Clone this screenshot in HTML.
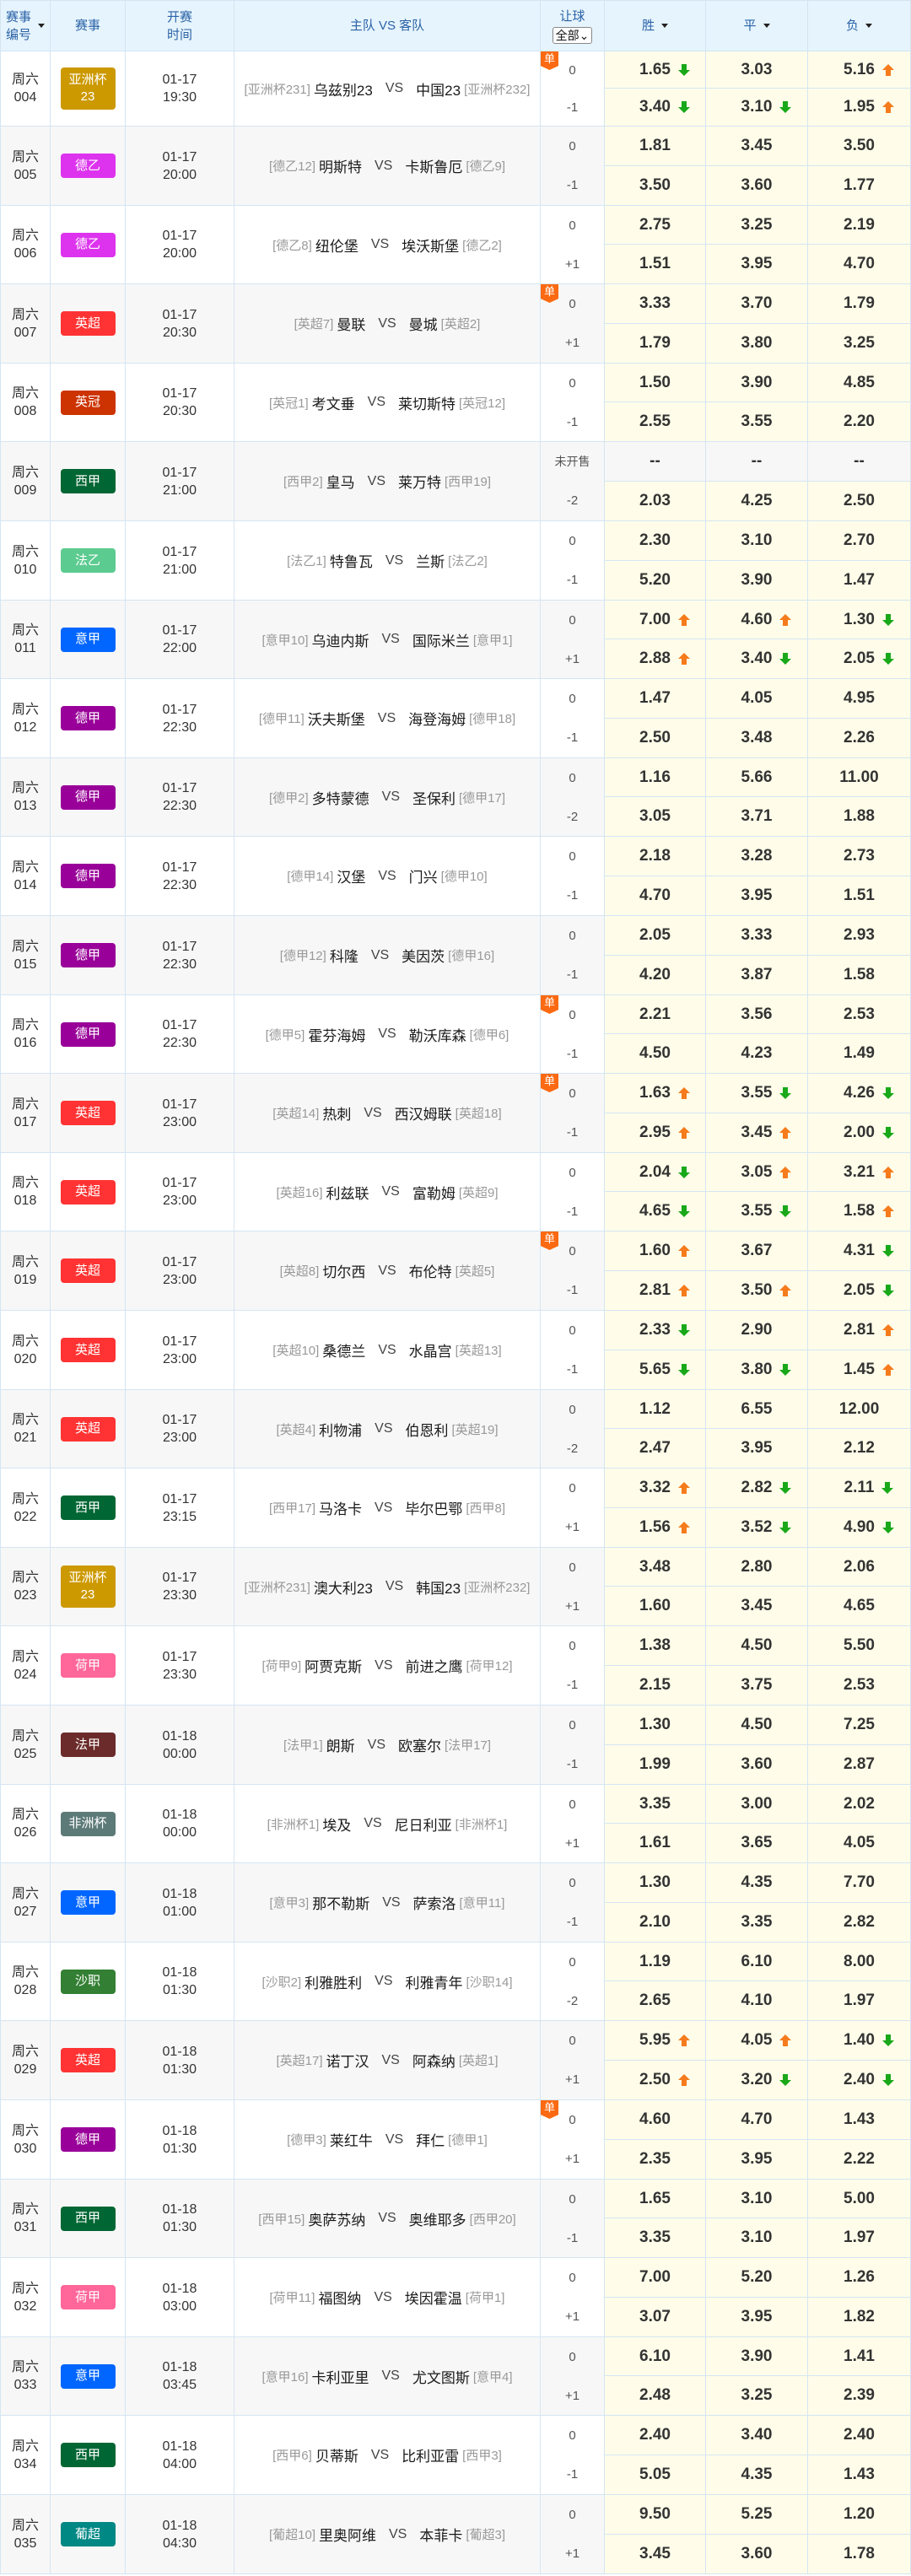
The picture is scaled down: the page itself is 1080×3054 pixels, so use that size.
<!DOCTYPE html>
<html><head><meta charset="utf-8">
<style>
*{margin:0;padding:0;box-sizing:border-box}
body{width:1080px;height:3054px;background:#fff;font-family:"Liberation Sans","Noto Sans CJK SC",sans-serif;position:relative;overflow:hidden;color:#333}
.h{position:absolute;left:0;top:0;width:1080px;height:61px;background:#e6f4fd;border-bottom:1px solid #d3e5f3;border-top:1px solid #d3e5f3;color:#2a62a6;font-size:15px}
.h div{position:absolute;top:0;bottom:0;border-right:1px solid #d3e5f3;display:flex;align-items:center;justify-content:center;text-align:center;line-height:21px}
.tri{display:inline-block;border:4px solid transparent;border-top:5px solid #222;border-bottom:0;margin-left:8px;vertical-align:middle}
.sel{display:inline-block;border:1px solid #888;border-radius:3px;background:#fff;color:#111;font-size:14px;line-height:18px;padding:0 3px;margin-top:2px}
.r{position:absolute;left:0;width:1080px;border-bottom:1px solid #d5e5f3;background:#fff}
.r.g{background:#f7f7f7}
.c{position:absolute;top:0;bottom:0;border-right:1px solid #d5e5f3;display:flex;align-items:center;justify-content:center;text-align:center}
.c1{left:0;width:60px;border-left:1px solid #d5e5f3;font-size:16px;line-height:21px;color:#333}
.c2{left:60px;width:89px}
.c3{left:149px;width:129px;font-size:16px;line-height:21px;color:#333}
.c4{left:278px;width:363px;white-space:nowrap}
.c4 i{font-style:normal;color:#999;font-size:15px;margin:0 4px}
.c4 b{font-weight:normal;color:#1a1a1a;font-size:17px}
.c4 em{font-style:normal;color:#444;font-size:16px;margin:0 15px}
.c5{left:641px;width:76px;flex-direction:column;align-items:stretch}
.c5 p{flex:1;display:flex;align-items:center;justify-content:center;font-size:15px;color:#555}
.b{display:flex;align-items:center;justify-content:center;width:65px;height:29px;border-radius:4px;color:#fff;font-size:15px;line-height:20px}
.b.t{height:50px}
.s{position:absolute;left:0;top:0;width:21px;height:22px;background:#fb6a12;color:#fff;font-size:13px;line-height:17px;text-align:center;clip-path:polygon(0 0,100% 0,100% 78%,50% 100%,0 78%)}
.o{position:absolute;left:717px;right:0;top:0;bottom:0;display:grid;grid-template-columns:120px 121px 1fr;grid-template-rows:1fr 1fr;background:#fffde9}
.o p{border-right:1px solid #d5e5f3;display:flex;align-items:center;justify-content:center;font-weight:bold;font-size:19px;color:#333}
.o p:nth-child(-n+3){border-bottom:1px solid #d5e5f3}
.o span{position:relative}
u{position:absolute;left:calc(100% + 9px);top:50%;width:14px;height:14px;margin-top:-7px}
u::before,u::after{content:"";position:absolute}
u.up::before{left:0;top:0;border:7px solid transparent;border-top:0;border-bottom:7px solid #f57b1c}
u.up::after{left:4px;top:7px;width:6px;height:7px;background:#f57b1c}
u.dn::before{left:0;top:7px;border:7px solid transparent;border-bottom:0;border-top:7px solid #19a819}
u.dn::after{left:4px;top:0;width:6px;height:7px;background:#19a819}
</style></head><body>

<div class="h">
<div style="left:0;width:60px;border-left:1px solid #d3e5f3;justify-content:flex-start;padding-left:6px;text-align:left">赛事<br>编号<span class="tri"></span></div>
<div style="left:60px;width:89px">赛事</div>
<div style="left:149px;width:129px">开赛<br>时间</div>
<div style="left:278px;width:363px">主队 VS 客队</div>
<div style="left:641px;width:76px;flex-direction:column">让球<span class="sel">全部&#8964;</span></div>
<div style="left:717px;width:120px">胜<span class="tri"></span></div>
<div style="left:837px;width:121px">平<span class="tri"></span></div>
<div style="left:958px;width:122px">负<span class="tri"></span></div>
</div>

<div class="r" style="top:61px;height:89px"><div class="c c1">周六<br>004</div><div class="c c2"><span class="b t" style="background:#cc9900">亚洲杯<br>23</span></div><div class="c c3">01-17<br>19:30</div><div class="c c4"><i>[亚洲杯231]</i><b>乌兹别23</b><em>VS</em><b>中国23</b><i>[亚洲杯232]</i></div><div class="c c5"><div class="s">单</div><p>0</p><p>-1</p></div><div class="o"><p><span>1.65<u class="dn"></u></span></p><p><span>3.03</span></p><p><span>5.16<u class="up"></u></span></p><p><span>3.40<u class="dn"></u></span></p><p><span>3.10<u class="dn"></u></span></p><p><span>1.95<u class="up"></u></span></p></div></div>

<div class="r g" style="top:150px;height:94px"><div class="c c1">周六<br>005</div><div class="c c2"><span class="b" style="background:#dd33ee">德乙</span></div><div class="c c3">01-17<br>20:00</div><div class="c c4"><i>[德乙12]</i><b>明斯特</b><em>VS</em><b>卡斯鲁厄</b><i>[德乙9]</i></div><div class="c c5"><p>0</p><p>-1</p></div><div class="o"><p><span>1.81</span></p><p><span>3.45</span></p><p><span>3.50</span></p><p><span>3.50</span></p><p><span>3.60</span></p><p><span>1.77</span></p></div></div>

<div class="r" style="top:244px;height:93px"><div class="c c1">周六<br>006</div><div class="c c2"><span class="b" style="background:#dd33ee">德乙</span></div><div class="c c3">01-17<br>20:00</div><div class="c c4"><i>[德乙8]</i><b>纽伦堡</b><em>VS</em><b>埃沃斯堡</b><i>[德乙2]</i></div><div class="c c5"><p>0</p><p>+1</p></div><div class="o"><p><span>2.75</span></p><p><span>3.25</span></p><p><span>2.19</span></p><p><span>1.51</span></p><p><span>3.95</span></p><p><span>4.70</span></p></div></div>

<div class="r g" style="top:337px;height:94px"><div class="c c1">周六<br>007</div><div class="c c2"><span class="b" style="background:#ff3333">英超</span></div><div class="c c3">01-17<br>20:30</div><div class="c c4"><i>[英超7]</i><b>曼联</b><em>VS</em><b>曼城</b><i>[英超2]</i></div><div class="c c5"><div class="s">单</div><p>0</p><p>+1</p></div><div class="o"><p><span>3.33</span></p><p><span>3.70</span></p><p><span>1.79</span></p><p><span>1.79</span></p><p><span>3.80</span></p><p><span>3.25</span></p></div></div>

<div class="r" style="top:431px;height:93px"><div class="c c1">周六<br>008</div><div class="c c2"><span class="b" style="background:#cc3300">英冠</span></div><div class="c c3">01-17<br>20:30</div><div class="c c4"><i>[英冠1]</i><b>考文垂</b><em>VS</em><b>莱切斯特</b><i>[英冠12]</i></div><div class="c c5"><p>0</p><p>-1</p></div><div class="o"><p><span>1.50</span></p><p><span>3.90</span></p><p><span>4.85</span></p><p><span>2.55</span></p><p><span>3.55</span></p><p><span>2.20</span></p></div></div>

<div class="r g" style="top:524px;height:94px"><div class="c c1">周六<br>009</div><div class="c c2"><span class="b" style="background:#006633">西甲</span></div><div class="c c3">01-17<br>21:00</div><div class="c c4"><i>[西甲2]</i><b>皇马</b><em>VS</em><b>莱万特</b><i>[西甲19]</i></div><div class="c c5"><p style="font-size:14px">未开售</p><p>-2</p></div><div class="o"><p style="background:#f7f7f7"><span>--</span></p><p style="background:#f7f7f7"><span>--</span></p><p style="background:#f7f7f7"><span>--</span></p><p><span>2.03</span></p><p><span>4.25</span></p><p><span>2.50</span></p></div></div>

<div class="r" style="top:618px;height:94px"><div class="c c1">周六<br>010</div><div class="c c2"><span class="b" style="background:#5ccb90">法乙</span></div><div class="c c3">01-17<br>21:00</div><div class="c c4"><i>[法乙1]</i><b>特鲁瓦</b><em>VS</em><b>兰斯</b><i>[法乙2]</i></div><div class="c c5"><p>0</p><p>-1</p></div><div class="o"><p><span>2.30</span></p><p><span>3.10</span></p><p><span>2.70</span></p><p><span>5.20</span></p><p><span>3.90</span></p><p><span>1.47</span></p></div></div>

<div class="r g" style="top:712px;height:93px"><div class="c c1">周六<br>011</div><div class="c c2"><span class="b" style="background:#0066ff">意甲</span></div><div class="c c3">01-17<br>22:00</div><div class="c c4"><i>[意甲10]</i><b>乌迪内斯</b><em>VS</em><b>国际米兰</b><i>[意甲1]</i></div><div class="c c5"><p>0</p><p>+1</p></div><div class="o"><p><span>7.00<u class="up"></u></span></p><p><span>4.60<u class="up"></u></span></p><p><span>1.30<u class="dn"></u></span></p><p><span>2.88<u class="up"></u></span></p><p><span>3.40<u class="dn"></u></span></p><p><span>2.05<u class="dn"></u></span></p></div></div>

<div class="r" style="top:805px;height:94px"><div class="c c1">周六<br>012</div><div class="c c2"><span class="b" style="background:#990099">德甲</span></div><div class="c c3">01-17<br>22:30</div><div class="c c4"><i>[德甲11]</i><b>沃夫斯堡</b><em>VS</em><b>海登海姆</b><i>[德甲18]</i></div><div class="c c5"><p>0</p><p>-1</p></div><div class="o"><p><span>1.47</span></p><p><span>4.05</span></p><p><span>4.95</span></p><p><span>2.50</span></p><p><span>3.48</span></p><p><span>2.26</span></p></div></div>

<div class="r g" style="top:899px;height:93px"><div class="c c1">周六<br>013</div><div class="c c2"><span class="b" style="background:#990099">德甲</span></div><div class="c c3">01-17<br>22:30</div><div class="c c4"><i>[德甲2]</i><b>多特蒙德</b><em>VS</em><b>圣保利</b><i>[德甲17]</i></div><div class="c c5"><p>0</p><p>-2</p></div><div class="o"><p><span>1.16</span></p><p><span>5.66</span></p><p><span>11.00</span></p><p><span>3.05</span></p><p><span>3.71</span></p><p><span>1.88</span></p></div></div>

<div class="r" style="top:992px;height:94px"><div class="c c1">周六<br>014</div><div class="c c2"><span class="b" style="background:#990099">德甲</span></div><div class="c c3">01-17<br>22:30</div><div class="c c4"><i>[德甲14]</i><b>汉堡</b><em>VS</em><b>门兴</b><i>[德甲10]</i></div><div class="c c5"><p>0</p><p>-1</p></div><div class="o"><p><span>2.18</span></p><p><span>3.28</span></p><p><span>2.73</span></p><p><span>4.70</span></p><p><span>3.95</span></p><p><span>1.51</span></p></div></div>

<div class="r g" style="top:1086px;height:94px"><div class="c c1">周六<br>015</div><div class="c c2"><span class="b" style="background:#990099">德甲</span></div><div class="c c3">01-17<br>22:30</div><div class="c c4"><i>[德甲12]</i><b>科隆</b><em>VS</em><b>美因茨</b><i>[德甲16]</i></div><div class="c c5"><p>0</p><p>-1</p></div><div class="o"><p><span>2.05</span></p><p><span>3.33</span></p><p><span>2.93</span></p><p><span>4.20</span></p><p><span>3.87</span></p><p><span>1.58</span></p></div></div>

<div class="r" style="top:1180px;height:93px"><div class="c c1">周六<br>016</div><div class="c c2"><span class="b" style="background:#990099">德甲</span></div><div class="c c3">01-17<br>22:30</div><div class="c c4"><i>[德甲5]</i><b>霍芬海姆</b><em>VS</em><b>勒沃库森</b><i>[德甲6]</i></div><div class="c c5"><div class="s">单</div><p>0</p><p>-1</p></div><div class="o"><p><span>2.21</span></p><p><span>3.56</span></p><p><span>2.53</span></p><p><span>4.50</span></p><p><span>4.23</span></p><p><span>1.49</span></p></div></div>

<div class="r g" style="top:1273px;height:94px"><div class="c c1">周六<br>017</div><div class="c c2"><span class="b" style="background:#ff3333">英超</span></div><div class="c c3">01-17<br>23:00</div><div class="c c4"><i>[英超14]</i><b>热刺</b><em>VS</em><b>西汉姆联</b><i>[英超18]</i></div><div class="c c5"><div class="s">单</div><p>0</p><p>-1</p></div><div class="o"><p><span>1.63<u class="up"></u></span></p><p><span>3.55<u class="dn"></u></span></p><p><span>4.26<u class="dn"></u></span></p><p><span>2.95<u class="up"></u></span></p><p><span>3.45<u class="up"></u></span></p><p><span>2.00<u class="dn"></u></span></p></div></div>

<div class="r" style="top:1367px;height:93px"><div class="c c1">周六<br>018</div><div class="c c2"><span class="b" style="background:#ff3333">英超</span></div><div class="c c3">01-17<br>23:00</div><div class="c c4"><i>[英超16]</i><b>利兹联</b><em>VS</em><b>富勒姆</b><i>[英超9]</i></div><div class="c c5"><p>0</p><p>-1</p></div><div class="o"><p><span>2.04<u class="dn"></u></span></p><p><span>3.05<u class="up"></u></span></p><p><span>3.21<u class="up"></u></span></p><p><span>4.65<u class="dn"></u></span></p><p><span>3.55<u class="dn"></u></span></p><p><span>1.58<u class="up"></u></span></p></div></div>

<div class="r g" style="top:1460px;height:94px"><div class="c c1">周六<br>019</div><div class="c c2"><span class="b" style="background:#ff3333">英超</span></div><div class="c c3">01-17<br>23:00</div><div class="c c4"><i>[英超8]</i><b>切尔西</b><em>VS</em><b>布伦特</b><i>[英超5]</i></div><div class="c c5"><div class="s">单</div><p>0</p><p>-1</p></div><div class="o"><p><span>1.60<u class="up"></u></span></p><p><span>3.67</span></p><p><span>4.31<u class="dn"></u></span></p><p><span>2.81<u class="up"></u></span></p><p><span>3.50<u class="up"></u></span></p><p><span>2.05<u class="dn"></u></span></p></div></div>

<div class="r" style="top:1554px;height:94px"><div class="c c1">周六<br>020</div><div class="c c2"><span class="b" style="background:#ff3333">英超</span></div><div class="c c3">01-17<br>23:00</div><div class="c c4"><i>[英超10]</i><b>桑德兰</b><em>VS</em><b>水晶宫</b><i>[英超13]</i></div><div class="c c5"><p>0</p><p>-1</p></div><div class="o"><p><span>2.33<u class="dn"></u></span></p><p><span>2.90</span></p><p><span>2.81<u class="up"></u></span></p><p><span>5.65<u class="dn"></u></span></p><p><span>3.80<u class="dn"></u></span></p><p><span>1.45<u class="up"></u></span></p></div></div>

<div class="r g" style="top:1648px;height:93px"><div class="c c1">周六<br>021</div><div class="c c2"><span class="b" style="background:#ff3333">英超</span></div><div class="c c3">01-17<br>23:00</div><div class="c c4"><i>[英超4]</i><b>利物浦</b><em>VS</em><b>伯恩利</b><i>[英超19]</i></div><div class="c c5"><p>0</p><p>-2</p></div><div class="o"><p><span>1.12</span></p><p><span>6.55</span></p><p><span>12.00</span></p><p><span>2.47</span></p><p><span>3.95</span></p><p><span>2.12</span></p></div></div>

<div class="r" style="top:1741px;height:94px"><div class="c c1">周六<br>022</div><div class="c c2"><span class="b" style="background:#006633">西甲</span></div><div class="c c3">01-17<br>23:15</div><div class="c c4"><i>[西甲17]</i><b>马洛卡</b><em>VS</em><b>毕尔巴鄂</b><i>[西甲8]</i></div><div class="c c5"><p>0</p><p>+1</p></div><div class="o"><p><span>3.32<u class="up"></u></span></p><p><span>2.82<u class="dn"></u></span></p><p><span>2.11<u class="dn"></u></span></p><p><span>1.56<u class="up"></u></span></p><p><span>3.52<u class="dn"></u></span></p><p><span>4.90<u class="dn"></u></span></p></div></div>

<div class="r g" style="top:1835px;height:93px"><div class="c c1">周六<br>023</div><div class="c c2"><span class="b t" style="background:#cc9900">亚洲杯<br>23</span></div><div class="c c3">01-17<br>23:30</div><div class="c c4"><i>[亚洲杯231]</i><b>澳大利23</b><em>VS</em><b>韩国23</b><i>[亚洲杯232]</i></div><div class="c c5"><p>0</p><p>+1</p></div><div class="o"><p><span>3.48</span></p><p><span>2.80</span></p><p><span>2.06</span></p><p><span>1.60</span></p><p><span>3.45</span></p><p><span>4.65</span></p></div></div>

<div class="r" style="top:1928px;height:94px"><div class="c c1">周六<br>024</div><div class="c c2"><span class="b" style="background:#ff6699">荷甲</span></div><div class="c c3">01-17<br>23:30</div><div class="c c4"><i>[荷甲9]</i><b>阿贾克斯</b><em>VS</em><b>前进之鹰</b><i>[荷甲12]</i></div><div class="c c5"><p>0</p><p>-1</p></div><div class="o"><p><span>1.38</span></p><p><span>4.50</span></p><p><span>5.50</span></p><p><span>2.15</span></p><p><span>3.75</span></p><p><span>2.53</span></p></div></div>

<div class="r g" style="top:2022px;height:94px"><div class="c c1">周六<br>025</div><div class="c c2"><span class="b" style="background:#6b2b2b">法甲</span></div><div class="c c3">01-18<br>00:00</div><div class="c c4"><i>[法甲1]</i><b>朗斯</b><em>VS</em><b>欧塞尔</b><i>[法甲17]</i></div><div class="c c5"><p>0</p><p>-1</p></div><div class="o"><p><span>1.30</span></p><p><span>4.50</span></p><p><span>7.25</span></p><p><span>1.99</span></p><p><span>3.60</span></p><p><span>2.87</span></p></div></div>

<div class="r" style="top:2116px;height:93px"><div class="c c1">周六<br>026</div><div class="c c2"><span class="b" style="background:#5c7a78">非洲杯</span></div><div class="c c3">01-18<br>00:00</div><div class="c c4"><i>[非洲杯1]</i><b>埃及</b><em>VS</em><b>尼日利亚</b><i>[非洲杯1]</i></div><div class="c c5"><p>0</p><p>+1</p></div><div class="o"><p><span>3.35</span></p><p><span>3.00</span></p><p><span>2.02</span></p><p><span>1.61</span></p><p><span>3.65</span></p><p><span>4.05</span></p></div></div>

<div class="r g" style="top:2209px;height:94px"><div class="c c1">周六<br>027</div><div class="c c2"><span class="b" style="background:#0066ff">意甲</span></div><div class="c c3">01-18<br>01:00</div><div class="c c4"><i>[意甲3]</i><b>那不勒斯</b><em>VS</em><b>萨索洛</b><i>[意甲11]</i></div><div class="c c5"><p>0</p><p>-1</p></div><div class="o"><p><span>1.30</span></p><p><span>4.35</span></p><p><span>7.70</span></p><p><span>2.10</span></p><p><span>3.35</span></p><p><span>2.82</span></p></div></div>

<div class="r" style="top:2303px;height:93px"><div class="c c1">周六<br>028</div><div class="c c2"><span class="b" style="background:#337f33">沙职</span></div><div class="c c3">01-18<br>01:30</div><div class="c c4"><i>[沙职2]</i><b>利雅胜利</b><em>VS</em><b>利雅青年</b><i>[沙职14]</i></div><div class="c c5"><p>0</p><p>-2</p></div><div class="o"><p><span>1.19</span></p><p><span>6.10</span></p><p><span>8.00</span></p><p><span>2.65</span></p><p><span>4.10</span></p><p><span>1.97</span></p></div></div>

<div class="r g" style="top:2396px;height:94px"><div class="c c1">周六<br>029</div><div class="c c2"><span class="b" style="background:#ff3333">英超</span></div><div class="c c3">01-18<br>01:30</div><div class="c c4"><i>[英超17]</i><b>诺丁汉</b><em>VS</em><b>阿森纳</b><i>[英超1]</i></div><div class="c c5"><p>0</p><p>+1</p></div><div class="o"><p><span>5.95<u class="up"></u></span></p><p><span>4.05<u class="up"></u></span></p><p><span>1.40<u class="dn"></u></span></p><p><span>2.50<u class="up"></u></span></p><p><span>3.20<u class="dn"></u></span></p><p><span>2.40<u class="dn"></u></span></p></div></div>

<div class="r" style="top:2490px;height:94px"><div class="c c1">周六<br>030</div><div class="c c2"><span class="b" style="background:#990099">德甲</span></div><div class="c c3">01-18<br>01:30</div><div class="c c4"><i>[德甲3]</i><b>莱红牛</b><em>VS</em><b>拜仁</b><i>[德甲1]</i></div><div class="c c5"><div class="s">单</div><p>0</p><p>+1</p></div><div class="o"><p><span>4.60</span></p><p><span>4.70</span></p><p><span>1.43</span></p><p><span>2.35</span></p><p><span>3.95</span></p><p><span>2.22</span></p></div></div>

<div class="r g" style="top:2584px;height:93px"><div class="c c1">周六<br>031</div><div class="c c2"><span class="b" style="background:#006633">西甲</span></div><div class="c c3">01-18<br>01:30</div><div class="c c4"><i>[西甲15]</i><b>奥萨苏纳</b><em>VS</em><b>奥维耶多</b><i>[西甲20]</i></div><div class="c c5"><p>0</p><p>-1</p></div><div class="o"><p><span>1.65</span></p><p><span>3.10</span></p><p><span>5.00</span></p><p><span>3.35</span></p><p><span>3.10</span></p><p><span>1.97</span></p></div></div>

<div class="r" style="top:2677px;height:94px"><div class="c c1">周六<br>032</div><div class="c c2"><span class="b" style="background:#ff6699">荷甲</span></div><div class="c c3">01-18<br>03:00</div><div class="c c4"><i>[荷甲11]</i><b>福图纳</b><em>VS</em><b>埃因霍温</b><i>[荷甲1]</i></div><div class="c c5"><p>0</p><p>+1</p></div><div class="o"><p><span>7.00</span></p><p><span>5.20</span></p><p><span>1.26</span></p><p><span>3.07</span></p><p><span>3.95</span></p><p><span>1.82</span></p></div></div>

<div class="r g" style="top:2771px;height:93px"><div class="c c1">周六<br>033</div><div class="c c2"><span class="b" style="background:#0066ff">意甲</span></div><div class="c c3">01-18<br>03:45</div><div class="c c4"><i>[意甲16]</i><b>卡利亚里</b><em>VS</em><b>尤文图斯</b><i>[意甲4]</i></div><div class="c c5"><p>0</p><p>+1</p></div><div class="o"><p><span>6.10</span></p><p><span>3.90</span></p><p><span>1.41</span></p><p><span>2.48</span></p><p><span>3.25</span></p><p><span>2.39</span></p></div></div>

<div class="r" style="top:2864px;height:94px"><div class="c c1">周六<br>034</div><div class="c c2"><span class="b" style="background:#006633">西甲</span></div><div class="c c3">01-18<br>04:00</div><div class="c c4"><i>[西甲6]</i><b>贝蒂斯</b><em>VS</em><b>比利亚雷</b><i>[西甲3]</i></div><div class="c c5"><p>0</p><p>-1</p></div><div class="o"><p><span>2.40</span></p><p><span>3.40</span></p><p><span>2.40</span></p><p><span>5.05</span></p><p><span>4.35</span></p><p><span>1.43</span></p></div></div>

<div class="r g" style="top:2958px;height:94px"><div class="c c1">周六<br>035</div><div class="c c2"><span class="b" style="background:#008885">葡超</span></div><div class="c c3">01-18<br>04:30</div><div class="c c4"><i>[葡超10]</i><b>里奥阿维</b><em>VS</em><b>本菲卡</b><i>[葡超3]</i></div><div class="c c5"><p>0</p><p>+1</p></div><div class="o"><p><span>9.50</span></p><p><span>5.25</span></p><p><span>1.20</span></p><p><span>3.45</span></p><p><span>3.60</span></p><p><span>1.78</span></p></div></div>

</body></html>
